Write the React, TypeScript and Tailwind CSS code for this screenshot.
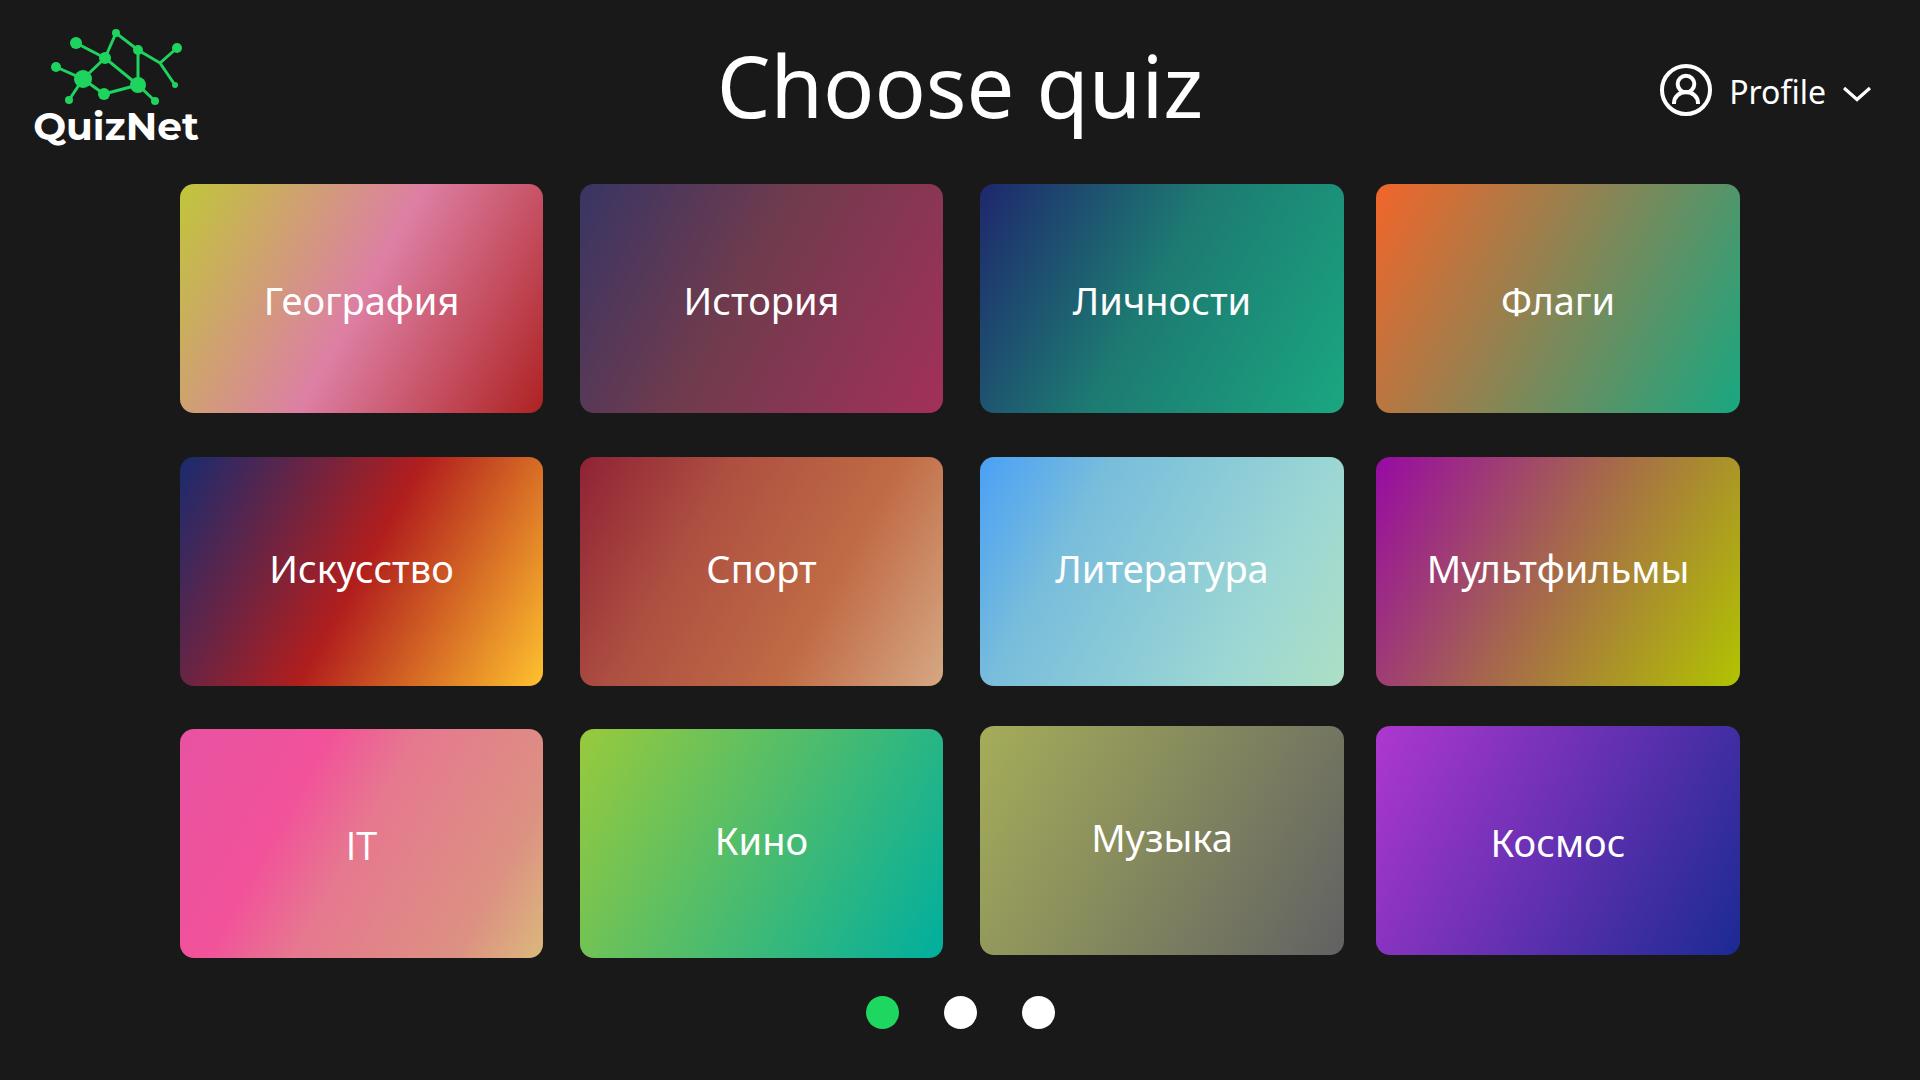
type Quiz = { title: string; gradient: string; raised?: boolean; latin?: boolean };

const leftQuizzes: Quiz[] = [
  { title: "География", gradient: "bg-[linear-gradient(119deg,#c0c639_0%,#dd7fa4_50%,#ae2222_100%)]" },
  { title: "История", gradient: "bg-[linear-gradient(119deg,#383564_0%,#703b4d_45%,#a3305a_100%)]" },
  { title: "Искусство", gradient: "bg-[linear-gradient(119deg,#182b70_0%,#b11e1d_50%,#ffc22e_100%)]", raised: true },
  { title: "Спорт", gradient: "bg-[linear-gradient(119deg,#8f2235_0%,#ae5041_32%,#c06b45_66%,#d5a883_100%)]", raised: true },
  { title: "IT", gradient: "bg-[linear-gradient(119deg,#e753a2_0%,#f2529a_31%,#e6788f_49%,#dc9182_82%,#dbb87c_100%)]", latin: true },
  { title: "Кино", gradient: "bg-[linear-gradient(119deg,#98ca3c_0%,#00ae9f_100%)]", raised: true },
];

const rightQuizzes: Quiz[] = [
  { title: "Личности", gradient: "bg-[linear-gradient(119deg,#1e276d_0%,#1d7a72_47%,#1aa780_100%)]" },
  { title: "Флаги", gradient: "bg-[linear-gradient(119deg,#f2652a_0%,#18a781_100%)]" },
  { title: "Литература", gradient: "bg-[linear-gradient(119deg,#4aa0f6_0%,#78bddb_27%,#9cd7d4_74%,#addfc4_100%)]", raised: true },
  { title: "Мультфильмы", gradient: "bg-[linear-gradient(119deg,#970aa4_0%,#a5644f_46%,#b1c400_100%)]", raised: true },
  { title: "Музыка", gradient: "bg-[linear-gradient(119deg,#a5ad59_0%,#616163_100%)]", raised: true },
  { title: "Космос", gradient: "bg-[linear-gradient(119deg,#ae37d0_0%,#1b2a93_100%)]" },
];

function QuizCard({ title, gradient, raised, latin }: Quiz) {
  return (
    <button
      type="button"
      className={`flex h-[229px] items-center justify-center rounded-[14px] text-[38px] leading-[52px] text-white ${gradient} ${raised ? "pb-2" : "pt-0.5"} ${latin ? "font-['Segoe_UI','Open_Sans',sans-serif]" : ""}`}
    >
      {title}
    </button>
  );
}

function Logo() {
  return (
    <a href="#" aria-label="QuizNet" className="flex w-[164px] flex-col items-center text-white">
      <svg viewBox="0 0 134 82" className="h-[82px] w-[134px]" fill="#1ed35e" stroke="#1ed35e" aria-hidden="true">
        <g fill="none" strokeWidth="3">
          <path d="M27 16 56 31 67 6 89 23 111 36 128 21M111 36 126 58" />
          <path d="M7 40 34 52 20 73M34 52 56 31 89 58V23M34 52 55 67 89 58 106 74" />
        </g>
        <g stroke="none">
          <circle cx="27" cy="16" r="6" />
          <circle cx="67" cy="6" r="4" />
          <circle cx="56" cy="31" r="6" />
          <circle cx="89" cy="23" r="5" />
          <circle cx="128" cy="21" r="5" />
          <circle cx="126" cy="58" r="3" />
          <circle cx="7" cy="40" r="5" />
          <circle cx="34" cy="52" r="9" />
          <circle cx="20" cy="73" r="4" />
          <circle cx="55" cy="67" r="6" />
          <circle cx="89" cy="58" r="8" />
          <circle cx="106" cy="74" r="4" />
        </g>
      </svg>
      <span className="font-['Montserrat','Inter',sans-serif] text-[39px] leading-[34px] font-bold">QuizNet</span>
    </a>
  );
}

function ProfileButton() {
  return (
    <button type="button" className="flex items-center text-[32px] leading-[44px]">
      <svg viewBox="0 0 52 52" className="size-[52px]" fill="none" stroke="white" strokeWidth="4" aria-hidden="true">
        <circle cx="26" cy="26" r="24" />
        <circle cx="26" cy="20" r="8.3" />
        <path d="M14 40v-1a12 11 0 0 1 24 0v1" />
      </svg>
      <span className="ml-[17px] pt-1">Profile</span>
      <svg viewBox="0 0 28 16" className="mt-2 ml-[17px] h-4 w-7" fill="none" stroke="white" strokeWidth="3.2" aria-hidden="true">
        <path d="M1 2 14 13.500 27 2" />
      </svg>
    </button>
  );
}

export default function App() {
  return (
    <div className="flex min-h-screen flex-col bg-[#191919] font-['Segoe_UI','Noto_Sans',sans-serif] text-white">
      <header className="grid h-[184px] grid-cols-[1fr_auto_1fr] items-start px-[34px] pt-[27px]">
        <Logo />
        <h1 className="text-[85px] leading-[117px]">Choose quiz</h1>
        <div className="flex justify-end pt-[37px] pr-[15px]">
          <ProfileButton />
        </div>
      </header>

      <main className="flex gap-[37px] px-[180px]">
        <section aria-label="Quizzes" className="flex flex-[763] flex-col gap-[43px]">
          <div className="grid grid-cols-2 gap-x-[37px] gap-y-11">
            {leftQuizzes.slice(0, 4).map((quiz) => (
              <QuizCard key={quiz.title} {...quiz} />
            ))}
          </div>
          <div className="grid grid-cols-2 gap-x-[37px]">
            {leftQuizzes.slice(4).map((quiz) => (
              <QuizCard key={quiz.title} {...quiz} />
            ))}
          </div>
        </section>
        <section aria-label="More quizzes" className="flex flex-[760] flex-col gap-10">
          <div className="grid grid-cols-2 gap-x-8 gap-y-11">
            {rightQuizzes.slice(0, 4).map((quiz) => (
              <QuizCard key={quiz.title} {...quiz} />
            ))}
          </div>
          <div className="grid grid-cols-2 gap-x-8">
            {rightQuizzes.slice(4).map((quiz) => (
              <QuizCard key={quiz.title} {...quiz} />
            ))}
          </div>
        </section>
      </main>

      <nav aria-label="Pages" className="mt-[38px] flex justify-center gap-[45px]">
        <button type="button" aria-label="Page 1" aria-current="page" className="size-[33px] rounded-full bg-[#1ed760]" />
        <button type="button" aria-label="Page 2" className="size-[33px] rounded-full bg-white" />
        <button type="button" aria-label="Page 3" className="size-[33px] rounded-full bg-white" />
      </nav>
    </div>
  );
}
